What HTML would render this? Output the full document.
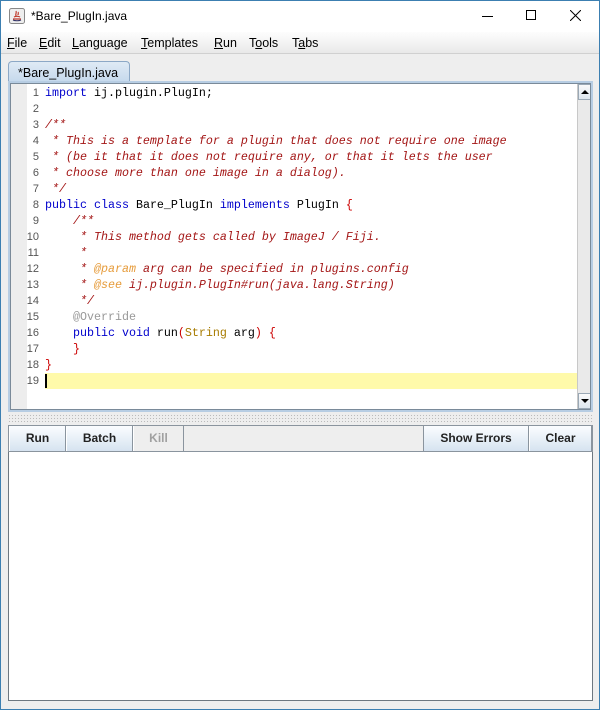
<!DOCTYPE html>
<html><head><meta charset="utf-8"><style>
*{margin:0;padding:0;box-sizing:border-box}
body{width:600px;height:710px;overflow:hidden;background:#f0f0f0;font-family:"Liberation Sans",Arial,sans-serif;position:relative}
.win{position:absolute;left:0;top:0;width:600px;height:710px;border:1px solid #3c7fb1;background:#eeeeee}
.title{position:absolute;left:0;top:0;width:598px;height:31px;background:#fff;font-size:12px}
.menu{position:absolute;left:0;top:31px;width:598px;height:22px;background:linear-gradient(#fdfdfd,#e9e9e9);border-bottom:1px solid #d0d0d0;font-size:12.5px}
.menu span{position:absolute;top:4px}
.tabrow{position:absolute;left:0;top:54px;width:598px;height:26px;background:#eeeeee}
.tab{position:absolute;left:7px;top:6px;width:122px;height:22px;background:linear-gradient(#dfeaf5,#c4d8ec);border:1px solid #8ca8c6;border-bottom:none;border-radius:4px 4px 0 0;font-size:12.5px;padding:4px 0 0 9px}
.editor{position:absolute;left:7px;top:80px;width:585px;height:331px;border:2px solid #b7cde3;background:#fff}
.ed-in{position:absolute;left:0;top:0;width:581px;height:327px;border:1px solid #7a8a99;overflow:hidden}
.gut{position:absolute;left:0;top:0;width:16px;height:100%;background:#ededed}
.gutw{position:absolute;left:16px;top:0;width:18px;height:100%;background:#fff}
.code{position:absolute;left:0;top:1px;font-family:"Liberation Mono",monospace;font-size:11.67px;line-height:16px;white-space:pre}
.ln{position:absolute;left:0;width:28px;text-align:right;color:#555;font-family:"Liberation Sans",sans-serif;font-size:11px}
.row{position:absolute;left:34px}
.k{color:#0000cc}.c{color:#a31515;font-style:italic}.d{color:#e69b3a;font-style:italic}.r{color:#cc0000}.t{color:#999}.y{color:#a77b00}
.hl{position:absolute;left:34px;top:289px;width:532px;height:16px;background:#fffaaa}
.sb{position:absolute;left:566px;top:0;width:14px;height:325px;background:#eaeaea;border-left:1px solid #c8c8c8}
.sbb{position:absolute;left:0;width:14px;height:16px;background:linear-gradient(#fafafa,#dde6ee);border:1px solid #9aa8b5}
.div{position:absolute;left:7px;top:413px;width:585px;height:9px;background-image:radial-gradient(#bbb 0.6px,transparent 0.8px);background-size:3px 3px;background-color:#eee}
.btns{position:absolute;left:7px;top:424px;width:585px;height:27px;background:#eeeeee;border:1px solid #8a949e}
.b{position:absolute;top:0;height:25px;background:linear-gradient(#fbfdff,#d6e3f0);border-right:1px solid #8a949e;border-left:1px solid #fff;font-size:12px;font-weight:bold;text-align:center;line-height:25px;color:#222}
.out{position:absolute;left:7px;top:451px;width:585px;height:249px;background:#fff;border:1px solid #6d7780;border-top:none;box-shadow:inset 0 0 0 2px #fff}
</style></head><body>
<div class="win">
<div class="title">
<svg style="position:absolute;left:8px;top:7px" width="16" height="16" viewBox="0 0 16 16"><rect x="0.5" y="0.5" width="15" height="15" rx="2" fill="#eee" stroke="#888"/><path d="M4 11h8M5 9c2-1 4-1 6 0M7 3c1 2-1 3 0 5M9 4c1 1 0 2 0 3" stroke="#c0392b" stroke-width="1.2" fill="none"/><path d="M4 12c2 1 6 1 8 0" stroke="#336" fill="none"/></svg>
<span style="position:absolute;left:30px;top:8px">*Bare_PlugIn.java</span>
<div style="position:absolute;left:481px;top:15px;width:11px;height:1px;background:#000"></div>
<div style="position:absolute;left:525px;top:9px;width:10px;height:10px;border:1px solid #000"></div>
<svg style="position:absolute;left:569px;top:9px" width="11" height="11"><path d="M0 0L11 11M11 0L0 11" stroke="#000" stroke-width="1"/></svg>
</div>
<div class="menu">
<span style="left:6px"><u>F</u>ile</span><span style="left:38px"><u>E</u>dit</span><span style="left:71px"><u>L</u>anguage</span><span style="left:140px"><u>T</u>emplates</span><span style="left:213px"><u>R</u>un</span><span style="left:248px">T<u>o</u>ols</span><span style="left:291px">T<u>a</u>bs</span>
</div>
<div class="tabrow"><div class="tab">*Bare_PlugIn.java</div></div>
<div class="editor"><div class="ed-in">
<div class="gut"></div><div class="gutw"></div>
<div class="hl"></div>
<div style="position:absolute;left:34px;top:290px;width:2px;height:14px;background:#000"></div>
<div class="code">
<div class="ln" style="top:0">1</div><div class="row" style="top:0"><span class="k">import</span> ij.plugin.PlugIn;</div>
<div class="ln" style="top:16px">2</div>
<div class="ln" style="top:32px">3</div><div class="row c" style="top:32px">/**</div>
<div class="ln" style="top:48px">4</div><div class="row c" style="top:48px"> * This is a template for a plugin that does not require one image</div>
<div class="ln" style="top:64px">5</div><div class="row c" style="top:64px"> * (be it that it does not require any, or that it lets the user</div>
<div class="ln" style="top:80px">6</div><div class="row c" style="top:80px"> * choose more than one image in a dialog).</div>
<div class="ln" style="top:96px">7</div><div class="row c" style="top:96px"> */</div>
<div class="ln" style="top:112px">8</div><div class="row" style="top:112px"><span class="k">public class</span> Bare_PlugIn <span class="k">implements</span> PlugIn <span class="r">{</span></div>
<div class="ln" style="top:128px">9</div><div class="row c" style="top:128px">    /**</div>
<div class="ln" style="top:144px">10</div><div class="row c" style="top:144px">     * This method gets called by ImageJ / Fiji.</div>
<div class="ln" style="top:160px">11</div><div class="row c" style="top:160px">     *</div>
<div class="ln" style="top:176px">12</div><div class="row c" style="top:176px">     * <span class="d">@param</span> arg can be specified in plugins.config</div>
<div class="ln" style="top:192px">13</div><div class="row c" style="top:192px">     * <span class="d">@see</span> ij.plugin.PlugIn#run(java.lang.String)</div>
<div class="ln" style="top:208px">14</div><div class="row c" style="top:208px">     */</div>
<div class="ln" style="top:224px">15</div><div class="row t" style="top:224px">    @Override</div>
<div class="ln" style="top:240px">16</div><div class="row" style="top:240px">    <span class="k">public void</span> run<span class="r">(</span><span class="y">String</span> arg<span class="r">)</span> <span class="r">{</span></div>
<div class="ln" style="top:256px">17</div><div class="row r" style="top:256px">    }</div>
<div class="ln" style="top:272px">18</div><div class="row r" style="top:272px">}</div>
<div class="ln" style="top:288px">19</div>
</div>
<div class="sb">
<div class="sbb" style="top:0"><svg width="12" height="14"><path d="M2 9L6 5L10 9Z" fill="#000"/></svg></div>
<div class="sbb" style="top:309px"><svg width="12" height="14"><path d="M2 5L6 9L10 5Z" fill="#000"/></svg></div>
</div>
</div></div>
<div class="div"></div>
<div class="btns">
<div class="b" style="left:0;width:57px">Run</div>
<div class="b" style="left:57px;width:67px">Batch</div>
<div class="b" style="left:124px;width:51px;background:#eeeeee;color:#a0a0a0">Kill</div>
<div class="b" style="left:414px;width:106px;border-left:1px solid #8a949e">Show Errors</div>
<div class="b" style="left:520px;width:63px">Clear</div>
</div>
<div class="out"></div>
</div>
</body></html>
